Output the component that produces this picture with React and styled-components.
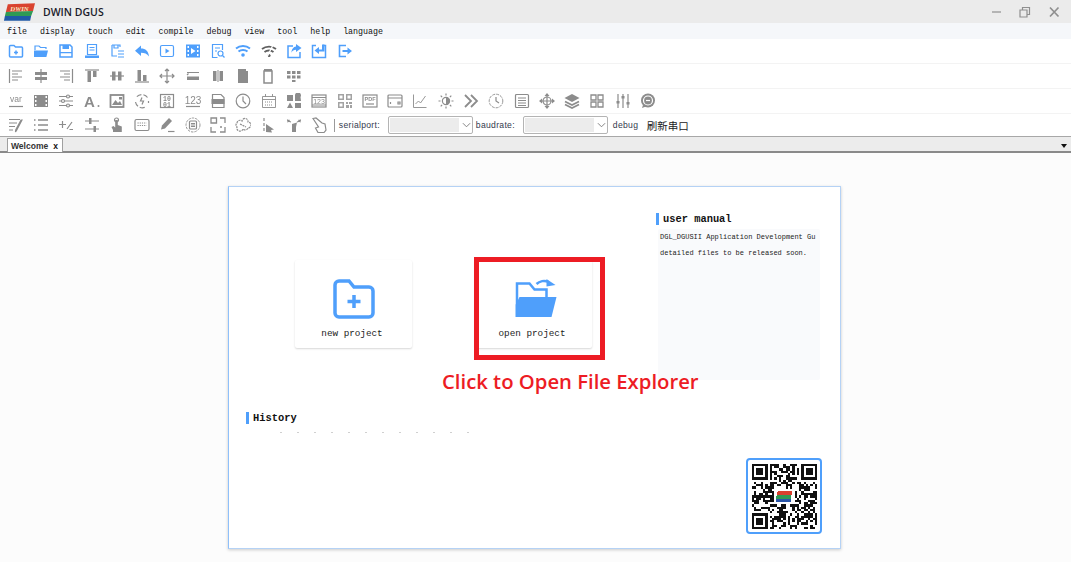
import React from 'react';
import styled, { createGlobalStyle } from 'styled-components';

const BLUE = '#4f9ffb';
const GRAY = '#8c8c8c';

const F = { fill: 'currentColor', stroke: 'none' };

// toolbar glyphs, all on a 16x16 box
const glyphs = {
  newFolder: <><path strokeWidth="1.500" d="M1.500 3.500a1 1 0 0 1 1-1h3.500l1.500 1.500h6a1 1 0 0 1 1 1v8a1 1 0 0 1-1 1h-11a1 1 0 0 1-1-1z" /><path strokeWidth="1.500" d="M8 7.500v4M6 9.500h4" /></>,
  openFolder: <><path d="M2 7V3h4l1.500 1.500H13V6" /><path {...F} d="M1 7.500h14l-1.600 6.500H1z" /></>,
  save: <><path strokeWidth="1.500" d="M2 2h10l2 2v10H2z" /><path {...F} d="M4.500 2h6.500v4H4.500zM2 9h12v1.200H2z" /></>,
  book: <><path d="M3.500 1.500h9v10h-9z" /><path d="M5.500 4.500h5M5.500 7h5" /><path {...F} d="M1 12.500h14V15H1z" /></>,
  saveAs: <><path d="M3 2h8v2M3 2v11h5" /><path d="M5 2v3h4V2M9 8h6M9 11h6M9 14h6" /></>,
  undo: <path {...F} d="M7 2.500v3c4.500 0 7.500 2.500 8 8-2-3-4.500-3.800-8-3.800V13L1 7.700z" />,
  play: <><rect x="1.500" y="2.500" width="13" height="11" rx="1.500" /><path {...F} d="M6.500 5.500l4 2.500-4 2.500z" /></>,
  film: <path {...F} fillRule="evenodd" d="M1 1.500h14v13H1zM2.500 3v2h1.500V3zM2.500 7v2h1.500V7zM2.500 11v2h1.500v-2zM12 3v2h1.500V3zM12 7v2h1.500V7zM12 11v2h1.500v-2zM6 5v6l4.500-3z" />,
  searchDoc: <><path d="M12.500 7V1.500h-10v13h5" /><path d="M5 5h5M5 8h2" /><circle cx="10.500" cy="10.500" r="2.500" /><path d="M12.500 12.500l2 2" /></>,
  wifi: <><path strokeWidth="2" d="M1 5.500c4-3.200 10-3.200 14 0M3.500 8.500c2.500-2 6.500-2 9 0" /><circle {...F} cx="8" cy="12" r="1.800" /></>,
  wifiOff: <><path strokeWidth="1.800" d="M1 6c4-3.200 10-3.200 14 0M3.500 9c2.500-2 6.500-2 9 0" /><circle {...F} cx="8" cy="12.500" r="1.600" /><path stroke="#fff" d="M12 2L6 14" /></>,
  shareOut: <><path strokeWidth="1.500" d="M7 3H2v11.500h12V9" /><path {...F} d="M10 1l5.500 4-5.500 4V6.800c-2.200 0-3.600.8-4.500 3C5.500 6 7.500 3.700 10 3.400z" /></>,
  importBox: <><path strokeWidth="1.500" d="M5 2.500H1.500v12h13v-12H12" /><path {...F} d="M13.500 1.500v7H8v2.500L3.500 7.500 8 4v2.500h3v-5z" /></>,
  exitBox: <><path strokeWidth="1.600" d="M9 2.500H2.500v11H9" /><path {...F} d="M5.500 7h5V4.500L15 8l-4.500 3.500V9h-5z" /></>,

  alignLeft: <path d="M1.500 1v14M4 3h10M4 6h6M4 9h10M4 12h6" />,
  alignCenter: <><path d="M8 1v14" /><path {...F} d="M2 4h12v3H2zM2 9h12v3H2z" /></>,
  alignRight: <path d="M14.500 1v14M2 3h10M6 6h6M2 9h10M6 12h6" />,
  alignTop: <><path d="M1 2h14" /><path {...F} d="M3.500 3H7v11H3.500zM9 3h3.500v6H9z" /></>,
  alignMiddle: <><path d="M1 8h14" /><path {...F} d="M3 3.500h3.500v9H3zM9 3.500h3.500v9H9z" /></>,
  alignBottom: <><path d="M1 14h14" /><path {...F} d="M3.500 2H7v11H3.500zM9 7h3.500v6H9z" /></>,
  cross: <path d="M8 1v14M1 8h14M6 3l2-2 2 2M6 13l2 2 2-2M3 6L1 8l2 2M13 6l2 2-2 2" />,
  spreadH: <><path d="M2 4.500h12M2 7l1.500-1.500" /><path {...F} d="M2 8.500h12v3.500H2z" /></>,
  spreadV: <path {...F} d="M3 3h3.500v10H3zM9.500 3H13v10H9.500zM7.500 2h1v12h-1z" />,
  sameSize: <path {...F} d="M3 1h8v2h2v12H3z" />,
  sameOutline: <><path strokeWidth="1.500" d="M3 3h8v12H3z" /><path {...F} d="M3 1h8v2H3z" /></>,
  dotGrid: <path {...F} d="M1 3h3.500v3H1zM6 3h3.500v3H6zM11 3h3.500v3H11zM1 7.500h3.500v3H1zM6 7.500h3.500v3H6zM11 7.500h3.500v3H11zM6 12h3.500v2H6z" />,

  varText: <><text x="8" y="9" textAnchor="middle" fontFamily="Liberation Sans, sans-serif" fontSize="8.500" {...F}>var</text><path d="M1 13.500h14" /></>,
  filmGray: <path {...F} fillRule="evenodd" d="M1 2h14v12H1zM2 3v2h1.500V3zM2 7v2h1.500V7zM2 11v2h1.500v-2zM12.500 3v2H14V3zM12.500 7v2H14V7zM12.500 11v2H14v-2z" />,
  sliders: <><path d="M1 3.500h14M1 8h14M1 12.500h14" /><circle cx="10" cy="3.500" r="1.500" fill="#fff" /><circle cx="5" cy="8" r="1.500" fill="#fff" /><circle cx="10" cy="12.500" r="1.500" fill="#fff" /></>,
  letterA: <><text x="0" y="14" fontFamily="Liberation Sans, sans-serif" fontWeight="700" fontSize="15" {...F}>A</text><circle {...F} cx="14.500" cy="13" r="1" /></>,
  picture: <><rect x="1.500" y="2" width="13" height="12" strokeWidth="1.800" /><path {...F} d="M3 12l3.500-5 2.500 3 2-2 2 4zM10 4h3v2.500h-3z" /></>,
  rotate: <><path strokeDasharray="5 2" d="M13.500 4.500A7 7 0 0 0 2.500 4M1.500 9a7 7 0 0 0 11 4.500M14.500 8v2" /><path d="M8 4.500L6.500 8h3L8 11.500" /></>,
  binary: <><rect x="1.500" y="1.500" width="13" height="13" /><text x="8" y="7.500" textAnchor="middle" fontFamily="Liberation Mono, monospace" fontWeight="700" fontSize="6.500" {...F}>10</text><text x="8" y="13.500" textAnchor="middle" fontFamily="Liberation Mono, monospace" fontWeight="700" fontSize="6.500" {...F}>01</text></>,
  numbers: <><text x="8" y="10.500" textAnchor="middle" fontFamily="Liberation Sans, sans-serif" fontSize="10" {...F}>123</text><path d="M1 13.500h14" /></>,
  fileTag: <><path d="M2.500 1.500H11l3 3v10H2.500z" /><path {...F} d="M1.500 6h13v5h-13z" /></>,
  clock: <><circle cx="8" cy="8" r="6.800" /><path d="M8 3.500V8l3 3" /></>,
  calendar: <><path d="M1.500 3.500h13v11h-13zM4.500 1v3M11.500 1v3M1.500 6.500h13" strokeWidth="0.900" /><path strokeDasharray="1 1" d="M4 9h8M4 12h8" /></>,
  shapes: <path {...F} d="M1 2h6v6H1zM9 2a3 3 0 1 1 5.500 2L15 8H9zM4 9.500L7 15H1zM9 10h6v5H9z" />,
  numBox: <><rect x="1" y="2" width="14" height="12" /><text x="8" y="10.500" textAnchor="middle" fontFamily="Liberation Sans, sans-serif" fontSize="7" {...F}>123</text><path d="M1 4.500h14M1 12h14" /></>,
  qrBlock: <path {...F} opacity="0.8" fillRule="evenodd" d="M1 1h6v6H1zM2.500 2.500v3h3v-3zM9 1h6v6H9zM10.500 2.500v3h3v-3zM1 9h6v6H1zM2.500 10.500v3h3v-3zM9 9h2v2H9zM12 9h3v2h-3zM9 12h3v3H9zM13 12h2v3h-2z" />,
  pdfBox: <><rect x="1" y="2" width="14" height="12" /><text x="8" y="8" textAnchor="middle" fontFamily="Liberation Sans, sans-serif" fontWeight="700" fontSize="5.500" {...F}>PDF</text><path d="M4 11h8" /></>,
  wallet: <><rect x="1" y="2" width="14" height="12" rx="1" /><path d="M1 5h14M3.500 9v2M11 9h2v2h-2z" /></>,
  chart: <path strokeWidth="0.900" d="M1.500 1.500v13h13M3.500 11l3-3 2 2 5-7" />,
  sun: <><circle cx="8" cy="8" r="3.600" /><path {...F} d="M8 4.400a3.600 3.600 0 0 1 0 7.200z" /><path d="M8 .500v2M8 13.500v2M.500 8h2M13.500 8h2M2.700 2.700l1.400 1.400M11.900 11.900l1.400 1.400M2.700 13.300l1.400-1.400M11.900 4.100l1.400-1.400" /></>,
  chevrons: <path strokeWidth="1.800" d="M2 2l6 6-6 6M8 2l6 6-6 6" />,
  clockDash: <><circle cx="8" cy="8" r="6.800" strokeWidth="0.900" strokeDasharray="3 1" /><path d="M8 4v4l3 2" /></>,
  listBox: <><rect x="1.500" y="1.500" width="13" height="13" rx="1" /><path d="M4 5h8M4 7.500h8M4 10h8M4 12.500h8" /></>,
  move: <><path d="M8 1v14M1 8h14" /><path {...F} d="M8 0l2.500 3h-5zM8 16l-2.500-3h5zM0 8l3-2.500v5zM16 8l-3 2.500v-5z" /><circle cx="8" cy="8" r="4" /></>,
  layers: <><path {...F} d="M8 1l7.500 4L8 9 .500 5z" /><path strokeWidth="1.800" d="M1 8.500L8 12l7-3.500M1 11.500L8 15l7-3.500" /></>,
  fourSquares: <path d="M2 2h5v5H2zM9 2h5v5H9zM2 9h5v5H2zM9 9h5v5H9z" strokeWidth="1.300" />,
  vSliders: <><path d="M3 1v14M8 1v14M13 1v14" /><path {...F} d="M1.500 8h3v2.500h-3zM6.500 3h3v2.500h-3zM11.500 9h3v2.500h-3z" /></>,
  badge: <><circle {...F} cx="8" cy="7.500" r="7" /><circle cx="8" cy="7.500" r="4.500" stroke="#fff" /><path stroke="#fff" d="M6 7.500h4" /><path {...F} d="M3 12l-1 3 4-1.500z" /></>,

  notes: <path d="M1 2.500h11M1 6h8M1 9.500h6M1 13h4M14 3l-5.500 10.500-1 1.500.2-2L13 3z" />,
  bullets: <path strokeWidth="1.500" d="M1 3h1.500M5 3h10M1 8h1.500M5 8h10M1 13h1.500M5 13h10" />,
  plusMinus: <path d="M4.500 4v7M1 7.500h7M14 5l-5 7M11.500 12.500H15" />,
  faders: <><path d="M1 4h14M1 12h14" /><path {...F} d="M5 1h2.500v6H5zM9.500 9H12v6H9.500z" /></>,
  handPress: <><circle cx="7.500" cy="3" r="2" /><path {...F} d="M6.200 3h2.600v5l4 1.500V15H4v-2L2.500 10l2-1 1.700 1.500z" /></>,
  keyboard: <><rect x="1" y="2.500" width="14" height="11" rx="1.500" /><path strokeDasharray="1.200 1" d="M3.500 6h9M3.500 8.500h9" /></>,
  pen: <><path {...F} d="M10 1l3 3-7 7.500-4 1 1-4z" /><path d="M9 14.500h6.500" /></>,
  circleList: <><circle cx="8" cy="8" r="7" strokeWidth="0.900" strokeDasharray="2.500 1" /><rect x="4.500" y="4" width="7" height="8" rx="1" /><path d="M6 6.500h4M6 8h4M6 9.500h4" /></>,
  corners: <path d="M1 6V1h5.500v5zM10 1h5v5M1 10v5h5M10 15h5v-5M10 10h2" strokeWidth="1.300" />,
  cloudShapes: <path strokeDasharray="2 .8" d="M2 6a3 3 0 0 1 5-2 3 3 0 0 1 6 1 3 3 0 0 1 0 6 3 3 0 0 1-5 1 3 3 0 0 1-6-2 2.500 2.500 0 0 1 0-4zM5 7l6 3" />,
  cursorTick: <><path d="M3 1v3M3 6v3M3 11v3" /><path {...F} d="M5 7l8 5.500-3 .5 1 2.500-6-.5z" /></>,
  arrowsHand: <><path d="M2 4l3 1M14 4l-3 1M1.500 2.500L2 4.500l1.500-1.500M14.500 2.500L14 4.500 12.500 3" /><path {...F} d="M6 7l5-1.500L10 10v5H6z" /></>,
  pointer: <path d="M2 1.500L5 1l6 5 3 1 1 6-2 2.500H7L4.500 11 7.500 10z" />,
};

const rows = [
  { tone: BLUE, names: ['newFolder', 'openFolder', 'save', 'book', 'saveAs', 'undo', 'play', 'film', 'searchDoc', 'wifi', 'wifiOff', 'shareOut', 'importBox', 'exitBox'] },
  { tone: GRAY, names: ['alignLeft', 'alignCenter', 'alignRight', 'alignTop', 'alignMiddle', 'alignBottom', 'cross', 'spreadH', 'spreadV', 'sameSize', 'sameOutline', 'dotGrid'] },
  { tone: GRAY, names: ['varText', 'filmGray', 'sliders', 'letterA', 'picture', 'rotate', 'binary', 'numbers', 'fileTag', 'clock', 'calendar', 'shapes', 'numBox', 'qrBlock', 'pdfBox', 'wallet', 'chart', 'sun', 'chevrons', 'clockDash', 'listBox', 'move', 'layers', 'fourSquares', 'vSliders', 'badge'] },
];

const lastRow = ['notes', 'bullets', 'plusMinus', 'faders', 'handPress', 'keyboard', 'pen', 'circleList', 'corners', 'cloudShapes', 'cursorTick', 'arrowsHand', 'pointer'];

const menus = ['file', 'display', 'touch', 'edit', 'compile', 'debug', 'view', 'tool', 'help', 'language'];

// pseudo random modules, only the finder squares have to look right
function qrModules(size) {
  const cells = [];
  let seed = 73;
  const inFinder = (x, y) => (x < 8 && y < 8) || (x >= size - 8 && y < 8) || (x < 8 && y >= size - 8);
  for (let y = 0; y < size; y++) {
    for (let x = 0; x < size; x++) {
      seed = (seed * 1103515245 + 12345) % 2147483648;
      if (!inFinder(x, y) && (seed >> 8) % 100 > 46) cells.push([x, y]);
    }
  }
  return cells;
}

const Finder = ({ x, y }) => (
  <>
    <rect x={x} y={y} width="7" height="7" fill="#111" />
    <rect x={x + 1} y={y + 1} width="5" height="5" fill="#fff" />
    <rect x={x + 2} y={y + 2} width="3" height="3" fill="#111" />
  </>
);

const QrCode = () => (
  <QrSvg viewBox="0 0 29 29">
    {qrModules(29).map(([x, y]) => (
      <rect key={`${x}-${y}`} x={x} y={y} width="1" height="1" fill="#111" />
    ))}
    <Finder x={0} y={0} />
    <Finder x={22} y={0} />
    <Finder x={0} y={22} />
    <rect x="10" y="11" width="9" height="7" fill="#fff" />
    <polygon points="11.500,12 18,12 17.600,13.800 11,13.800" fill="#d8402f" />
    <polygon points="11,13.800 17.600,13.800 17.300,15.400 10.800,15.400" fill="#2f9a55" />
    <polygon points="10.800,15.400 17.300,15.400 17.200,16.800 10.800,16.800" fill="#2a55a8" />
  </QrSvg>
);

const Logo = () => (
  <LogoSvg viewBox="0 0 34 18">
    <polygon points="6,1 34,0 32,8 4,9" fill="#d9432f" />
    <polygon points="4,9 32,8 30,13 3,13" fill="#2f9a55" />
    <polygon points="3,13 30,13 29,18 2,18" fill="#1f5aa8" />
    <LogoText x="18" y="8">DWIN</LogoText>
  </LogoSvg>
);

const SelectChevron = () => (
  <Chevron viewBox="0 0 10 6"><path d="M1 1l4 4 4-4" /></Chevron>
);

export default function App() {
  return (
    <>
      <GlobalStyle />
      <Window>
        <TitleBar>
          <Logo />
          <AppName>DWIN DGUS</AppName>
          <WindowControls>
            <ControlSvg viewBox="0 0 12 12"><path d="M2 6h9" /></ControlSvg>
            <ControlSvg viewBox="0 0 12 12"><path d="M1 4h7v7H1zM3.500 4V1.500h7v7H8" /></ControlSvg>
            <ControlSvg viewBox="0 0 12 12"><path strokeWidth="1.700" d="M2 1.500l8.500 9M10.500 1.500l-8.500 9" /></ControlSvg>
          </WindowControls>
        </TitleBar>

        <MenuBar>
          {menus.map((m) => <MenuItem key={m}>{m}</MenuItem>)}
        </MenuBar>

        {rows.map((row, i) => (
          <ToolRow key={i}>
            {row.names.map((name) => (
              <ToolButton key={name} $tone={name === 'wifiOff' ? '#5f5f5f' : row.tone}>
                <Glyph viewBox="0 0 16 16">{glyphs[name]}</Glyph>
              </ToolButton>
            ))}
          </ToolRow>
        ))}

        <ToolRow $last>
          {lastRow.map((name) => (
            <ToolButton key={name} $tone={GRAY}>
              <Glyph viewBox="0 0 16 16">{glyphs[name]}</Glyph>
            </ToolButton>
          ))}
          <Divider />
          <PortLabel $gap={4} $width={49}>serialport:</PortLabel>
          <PortSelect><SelectValue /><SelectChevron /></PortSelect>
          <PortLabel $gap={3} $width={47}>baudrate:</PortLabel>
          <PortSelect><SelectValue /><SelectChevron /></PortSelect>
          <PortLabel $gap={5} $width={28}>debug</PortLabel>
          <RefreshLabel>刷新串口</RefreshLabel>
        </ToolRow>

        <TabStrip>
          <Tab>Welcome<TabClose>x</TabClose></Tab>
          <TabMenu />
        </TabStrip>

        <Main>
          <Card>
            <LeftColumn>
              <Tiles>
                <Tile>
                  <TileIcon viewBox="0 0 42 40">
                    <path fill="none" stroke={BLUE} strokeWidth="3.500" d="M2 6a4 4 0 0 1 4-4h10l5 6h15a4 4 0 0 1 4 4v22a4 4 0 0 1-4 4H6a4 4 0 0 1-4-4z" />
                    <path fill="none" stroke={BLUE} strokeWidth="3.500" d="M21 16v13M14.500 22.500h13" />
                  </TileIcon>
                  <TileLabel>new project</TileLabel>
                </Tile>
                <Tile>
                  <TileIcon viewBox="0 0 41 40" $shift={4}>
                    <path fill="none" stroke={BLUE} strokeWidth="2.500" d="M1.500 26V4.500H14l5 6h12V18" />
                    <path fill={BLUE} d="M4 18h37l-5 20H0V26z" />
                    <path fill="none" stroke={BLUE} strokeWidth="2.500" d="M21 5c3-3 8-4 12-2" />
                    <path fill={BLUE} d="M31 0l9 6-9 1.500z" />
                  </TileIcon>
                  <TileLabel>open project</TileLabel>
                </Tile>
              </Tiles>
              <History>
                <SectionTitle>History</SectionTitle>
                <FadedRow />
              </History>
            </LeftColumn>
            <RightColumn>
              <SectionTitle>user manual</SectionTitle>
              <ManualPanel>
                <ManualLine>DGL_DGUSII Application Development Gu</ManualLine>
                <ManualLine>detailed files to be released soon.</ManualLine>
              </ManualPanel>
              <QrFrame><QrCode /></QrFrame>
            </RightColumn>
            <Highlight />
            <Callout>Click to Open File Explorer</Callout>
          </Card>
        </Main>
      </Window>
    </>
  );
}

const GlobalStyle = createGlobalStyle`
  html, body {
    margin: 0;
    padding: 0;
    background: #fcfcfc;
  }
`;

const Window = styled.div`
  width: 1071px;
  height: 562px;
  overflow: hidden;
  display: flex;
  flex-direction: column;
  background: #fcfcfc;
`;

const TitleBar = styled.div`
  height: 23px;
  display: flex;
  align-items: center;
  padding-left: 2px;
  background: #ebebeb;
`;

const LogoSvg = styled.svg`
  width: 33px;
  height: 18px;
`;

const LogoText = styled.text`
  font-family: "Liberation Serif", serif;
  font-size: 7px;
  font-style: italic;
  font-weight: 700;
  fill: #f7e7c0;
  text-anchor: middle;
`;

const AppName = styled.div`
  margin-left: 8px;
  font-family: "Open Sans", sans-serif;
  font-size: 10.5px;
  font-weight: 600;
  color: #1a1a2a;
`;

const WindowControls = styled.div`
  margin-left: auto;
  padding-right: 11px;
  display: flex;
  align-items: center;
  gap: 17px;
`;

const ControlSvg = styled.svg`
  width: 12px;
  height: 12px;
  fill: none;
  stroke: #8f8f8f;
  stroke-width: 1.2;
`;

const MenuBar = styled.div`
  height: 16px;
  display: flex;
  align-items: center;
  gap: 13px;
  padding-left: 7px;
  background: #f5f7fa;
`;

const MenuItem = styled.span`
  font-family: "Liberation Mono", monospace;
  font-size: 8.3px;
  color: #111;
`;

const ToolRow = styled.div`
  height: ${(p) => (p.$last ? 22 : 24)}px;
  display: flex;
  align-items: center;
  padding-left: 3px;
  background: #fff;
  border-bottom: ${(p) => (p.$last ? 'none' : '1px solid #f3f3f3')};
`;

const ToolButton = styled.div`
  flex: 0 0 25.3px;
  display: flex;
  justify-content: center;
  color: ${(p) => p.$tone};
`;

const Glyph = styled.svg`
  width: 16px;
  height: 16px;
  fill: none;
  stroke: currentColor;
  stroke-width: 1.2;
  filter: blur(0.35px);
`;

const Divider = styled.div`
  width: 1px;
  height: 13px;
  margin-left: 2px;
  background: #9a9a9a;
`;

const PortLabel = styled.span`
  flex: 0 0 ${(p) => p.$width}px;
  margin-left: ${(p) => p.$gap}px;
  font-family: "Liberation Sans", sans-serif;
  font-size: 8.6px;
  letter-spacing: 0.3px;
  color: #333a4d;
`;

const PortSelect = styled.div`
  flex: 0 0 85px;
  height: 18px;
  box-sizing: border-box;
  display: flex;
  align-items: center;
  padding: 0 1px;
  background: #fff;
  border: 1px solid #b4b4b4;
  border-radius: 2px;
`;

const SelectValue = styled.div`
  width: 69px;
  height: 14px;
  background: #ececec;
`;

const Chevron = styled.svg`
  width: 9px;
  height: 6px;
  margin-left: 3px;
  fill: none;
  stroke: #777;
`;

const RefreshLabel = styled.span`
  margin-left: 6px;
  font-family: "Noto Sans CJK SC", sans-serif;
  font-size: 10.5px;
  color: #222;
`;

const TabStrip = styled.div`
  height: 17px;
  box-sizing: border-box;
  display: flex;
  align-items: flex-end;
  padding-left: 7px;
  background: #ececec;
  border-top: 1px solid #a8a8a8;
  border-bottom: 2px solid #8a8a8a;
`;

const Tab = styled.div`
  width: 56px;
  height: 14px;
  box-sizing: border-box;
  margin-bottom: -1px;
  display: flex;
  align-items: center;
  padding-left: 3px;
  background: #fff;
  border: 1px solid #a0a0a0;
  border-bottom: none;
  font-family: "Liberation Sans", sans-serif;
  font-size: 8.5px;
  font-weight: 700;
  color: #333;
`;

const TabClose = styled.span`
  margin-left: auto;
  padding-right: 4px;
  color: #111;
`;

const TabMenu = styled.div`
  margin: 0 4px 3px auto;
  width: 0;
  height: 0;
  border-left: 3.5px solid transparent;
  border-right: 3.5px solid transparent;
  border-top: 4px solid #111;
`;

const Main = styled.div`
  flex: 1;
  padding: 33px 0 0 228px;
`;

const Card = styled.div`
  position: relative;
  width: 613px;
  height: 363px;
  box-sizing: border-box;
  display: flex;
  background: #fff;
  border: 1px solid #b5d2f5;
  border-left: 1px solid #8fc0fa;
  box-shadow: 0 1px 3px rgba(0, 0, 0, 0.2);
`;

const LeftColumn = styled.div`
  width: 427px;
  padding-top: 73px;
`;

const Tiles = styled.div`
  display: flex;
  gap: 63px;
  padding-left: 66px;
`;

const Tile = styled.div`
  width: 117px;
  height: 88px;
  display: flex;
  flex-direction: column;
  align-items: center;
  padding-top: 19px;
  box-sizing: border-box;
  background: #fff;
  border-radius: 2px;
  box-shadow: 0 1px 2px rgba(0, 0, 0, 0.16);
`;

const TileIcon = styled.svg`
  width: 42px;
  height: 40px;
  margin-left: ${(p) => p.$shift ?? 0}px;
  filter: blur(0.3px);
`;

const TileLabel = styled.div`
  margin: 9px 3px 0 0;
  font-family: "Liberation Mono", monospace;
  font-size: 9.3px;
  color: #222;
`;

const History = styled.div`
  margin-top: 64px;
  padding-left: 17px;
`;

const SectionTitle = styled.div`
  height: 12px;
  display: flex;
  align-items: center;
  padding-left: 4px;
  border-left: 3px solid ${BLUE};
  font-family: "Liberation Mono", monospace;
  font-size: 10.4px;
  font-weight: 700;
  color: #111;
`;

const FadedRow = styled.div`
  width: 195px;
  height: 1px;
  margin: 8px 0 0 34px;
  background: repeating-linear-gradient(90deg, #d0d0d0 0 2px, transparent 2px 17px);
`;

const RightColumn = styled.div`
  flex: 1;
  padding-top: 26px;
  display: flex;
  flex-direction: column;
`;

const ManualPanel = styled.div`
  width: 162px;
  height: 151px;
  margin: 4px 0 0 2px;
  box-sizing: border-box;
  padding-top: 2px;
  background: #f9fafc;
  border-radius: 2px;
`;

const ManualLine = styled.div`
  height: 16px;
  line-height: 13px;
  padding-left: 2px;
  white-space: nowrap;
  font-family: "Liberation Mono", monospace;
  font-size: 7px;
  color: #222;
`;

const QrFrame = styled.div`
  width: 76px;
  height: 76px;
  margin: 78px 0 0 90px;
  box-sizing: border-box;
  display: flex;
  align-items: center;
  justify-content: center;
  background: #fff;
  border: 2px solid ${BLUE};
  border-radius: 4px;
`;

const QrSvg = styled.svg`
  width: 65px;
  height: 65px;
  shape-rendering: crispEdges;
  filter: blur(0.3px);
`;

const Highlight = styled.div`
  position: absolute;
  left: 245px;
  top: 70px;
  width: 131px;
  height: 103px;
  box-sizing: border-box;
  border: 5px solid #ed1c24;
`;

const Callout = styled.div`
  position: absolute;
  left: 213px;
  top: 180px;
  font-family: "Open Sans", sans-serif;
  font-size: 20.3px;
  font-weight: 600;
  white-space: nowrap;
  color: #ed1c24;
`;
